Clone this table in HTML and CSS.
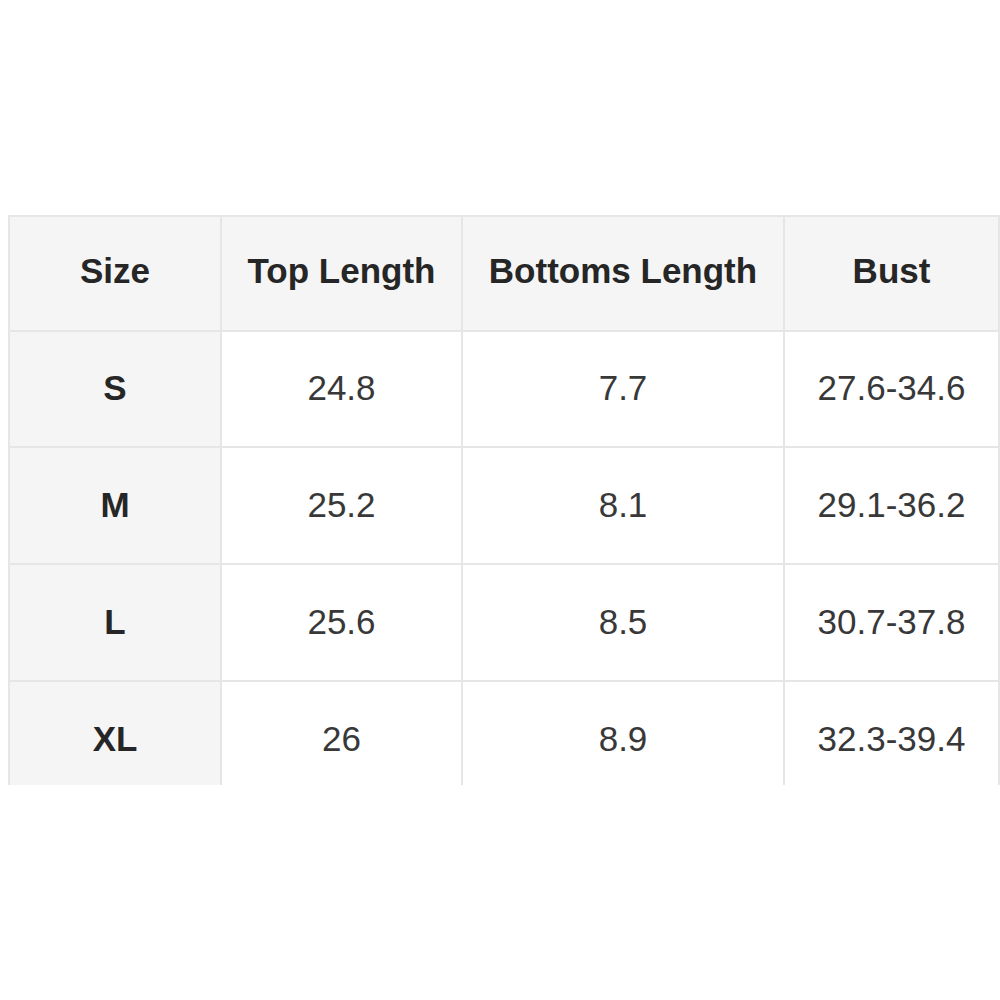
FILE: index.html
```html
<!DOCTYPE html>
<html lang="en">
<head>
<meta charset="utf-8">
<title>Size Chart</title>
<link rel="stylesheet" href="styles.css">
</head>
<body>
<div class="frame">
  <div class="chart" role="table">
    <div class="cell head">Size</div>
    <div class="cell head">Top Length</div>
    <div class="cell head">Bottoms Length</div>
    <div class="cell head">Bust</div>

    <div class="cell size">S</div>
    <div class="cell">24.8</div>
    <div class="cell">7.7</div>
    <div class="cell">27.6-34.6</div>

    <div class="cell size">M</div>
    <div class="cell">25.2</div>
    <div class="cell">8.1</div>
    <div class="cell">29.1-36.2</div>

    <div class="cell size">L</div>
    <div class="cell">25.6</div>
    <div class="cell">8.5</div>
    <div class="cell">30.7-37.8</div>

    <div class="cell size">XL</div>
    <div class="cell">26</div>
    <div class="cell">8.9</div>
    <div class="cell">32.3-39.4</div>
  </div>
</div>
</body>
</html>
```

FILE: styles.css
```css
html, body {
  margin: 0;
  padding: 0;
  background: #ffffff;
}

body {
  font-family: "Liberation Sans", Arial, Helvetica, sans-serif;
  width: 1000px;
  height: 1000px;
  overflow: hidden;
}

.frame {
  margin-top: 215px;
  margin-left: 8px;
  height: 570px;
  overflow: hidden;
}

.chart {
  display: grid;
  grid-template-columns: 210px 239px 320px 213px;
  grid-template-rows: 113px 114px 115px 115px 115px;
  gap: 2px;
  padding: 2px;
  background: #e6e6e6;
  width: max-content;
}

.cell {
  display: flex;
  align-items: center;
  justify-content: center;
  background: #ffffff;
  color: #383838;
  font-size: 35px;
  padding-bottom: 2px;
}

.head {
  background: #f5f5f5;
  color: #262626;
  font-weight: bold;
  padding-bottom: 6px;
}

.size {
  background: #f5f5f5;
  color: #262626;
  font-weight: bold;
}
```
